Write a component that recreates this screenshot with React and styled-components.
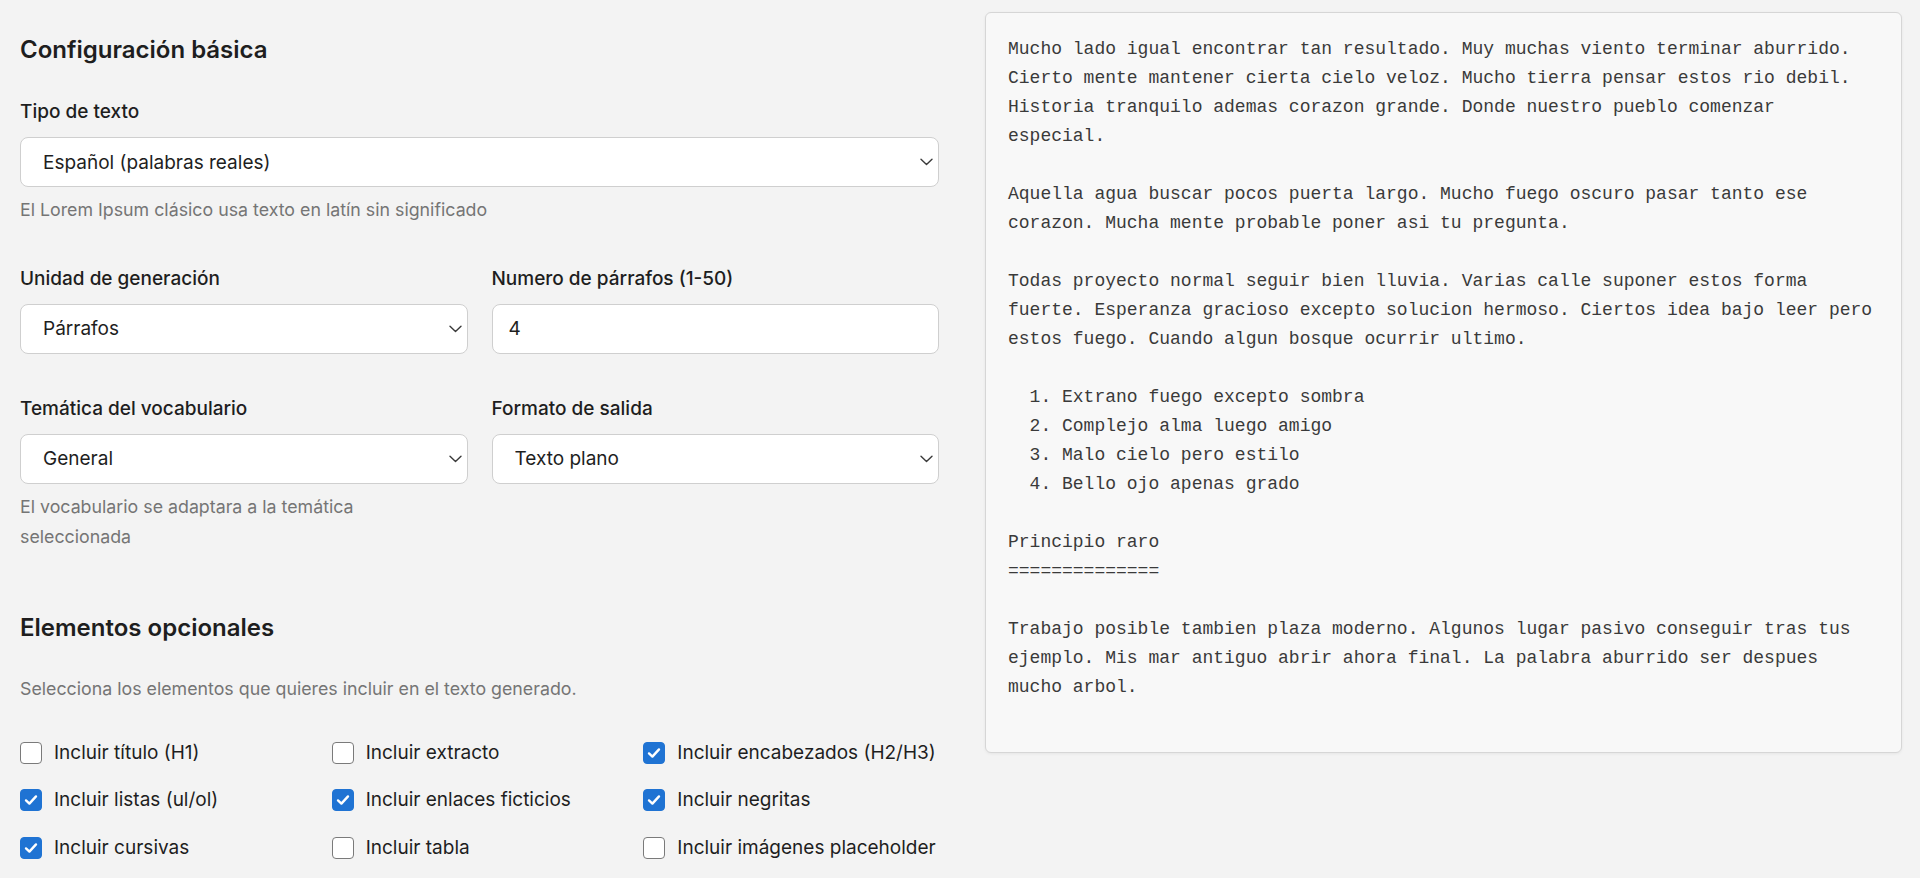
import React from "react";
import styled, { createGlobalStyle } from "styled-components";

const GlobalStyle = createGlobalStyle`
  * {
    box-sizing: border-box;
  }

  html,
  body {
    margin: 0;
    padding: 0;
    background-color: #f3f3f3;
  }

  body {
    font-family: Inter, "Noto Sans", sans-serif;
    color: #1e1e1e;
    overflow: hidden;
  }
`;

const outputText = `Mucho lado igual encontrar tan resultado. Muy muchas viento terminar aburrido.
Cierto mente mantener cierta cielo veloz. Mucho tierra pensar estos rio debil.
Historia tranquilo ademas corazon grande. Donde nuestro pueblo comenzar
especial.

Aquella agua buscar pocos puerta largo. Mucho fuego oscuro pasar tanto ese
corazon. Mucha mente probable poner asi tu pregunta.

Todas proyecto normal seguir bien lluvia. Varias calle suponer estos forma
fuerte. Esperanza gracioso excepto solucion hermoso. Ciertos idea bajo leer pero
estos fuego. Cuando algun bosque ocurrir ultimo.

  1. Extrano fuego excepto sombra
  2. Complejo alma luego amigo
  3. Malo cielo pero estilo
  4. Bello ojo apenas grado

Principio raro
==============

Trabajo posible tambien plaza moderno. Algunos lugar pasivo conseguir tras tus
ejemplo. Mis mar antiguo abrir ahora final. La palabra aburrido ser despues
mucho arbol.`;

const options = [
  { id: "titulo", label: "Incluir título (H1)", checked: false },
  { id: "extracto", label: "Incluir extracto", checked: false },
  { id: "encabezados", label: "Incluir encabezados (H2/H3)", checked: true },
  { id: "listas", label: "Incluir listas (ul/ol)", checked: true },
  { id: "enlaces", label: "Incluir enlaces ficticios", checked: true },
  { id: "negritas", label: "Incluir negritas", checked: true },
  { id: "cursivas", label: "Incluir cursivas", checked: true },
  { id: "tabla", label: "Incluir tabla", checked: false },
  { id: "imagenes", label: "Incluir imágenes placeholder", checked: false },
];

// flecha del select
const ChevronIcon = () => (
  <svg width="13" height="8" viewBox="0 0 13 8" fill="none">
    <path
      d="M1 1.2L6.5 6.5L12 1.2"
      stroke="#3a3a3a"
      strokeWidth="1.4"
      strokeLinecap="round"
      strokeLinejoin="round"
    />
  </svg>
);

const CheckIcon = () => (
  <svg width="14" height="12" viewBox="0 0 14 12" fill="none">
    <path
      d="M2 6.4L5.4 9.6L12 2.4"
      stroke="#ffffff"
      strokeWidth="2.4"
      strokeLinecap="round"
      strokeLinejoin="round"
    />
  </svg>
);

const SelectField = ({ value, children }) => (
  <StSelectWrap>
    <StSelect defaultValue={value}>{children}</StSelect>
    <StChevron>
      <ChevronIcon />
    </StChevron>
  </StSelectWrap>
);

const App = () => {
  return (
    <>
      <GlobalStyle />
      <StPage>
        <StSettings>
          <StTitle>Configuración básica</StTitle>

          <StField $top={37}>
            <StLabel>Tipo de texto</StLabel>
            <SelectField value="es">
              <option value="es">Español (palabras reales)</option>
              <option value="lorem">Lorem Ipsum clásico</option>
            </SelectField>
            <StHelp>El Lorem Ipsum clásico usa texto en latín sin significado</StHelp>
          </StField>

          <StRow $top={42}>
            <StField>
              <StLabel>Unidad de generación</StLabel>
              <SelectField value="p">
                <option value="p">Párrafos</option>
                <option value="w">Palabras</option>
              </SelectField>
            </StField>
            <StField>
              <StLabel>Numero de párrafos (1-50)</StLabel>
              <StInput type="number" defaultValue={4} min={1} max={50} />
            </StField>
          </StRow>

          <StRow $top={44}>
            <StField>
              <StLabel>Temática del vocabulario</StLabel>
              <SelectField value="general">
                <option value="general">General</option>
                <option value="tech">Tecnología</option>
              </SelectField>
              <StHelp>El vocabulario se adaptara a la temática seleccionada</StHelp>
            </StField>
            <StField>
              <StLabel>Formato de salida</StLabel>
              <SelectField value="plain">
                <option value="plain">Texto plano</option>
                <option value="html">HTML</option>
              </SelectField>
            </StField>
          </StRow>

          <StTitle $top={60}>Elementos opcionales</StTitle>
          <StIntro>Selecciona los elementos que quieres incluir en el texto generado.</StIntro>

          <StCheckGrid>
            {options.map((opt) => (
              <StCheckItem key={opt.id}>
                <StBox $checked={opt.checked}>{opt.checked && <CheckIcon />}</StBox>
                {opt.label}
              </StCheckItem>
            ))}
          </StCheckGrid>
        </StSettings>

        <StOutput>{outputText}</StOutput>
      </StPage>
    </>
  );
};

const StPage = styled.div`
  display: grid;
  grid-template-columns: 919px 917px;
  column-gap: 46px;
  align-items: start;
  padding: 0 18px 0 20px;
  height: 878px;
`;

const StSettings = styled.div`
  padding-top: 35px;
`;

const StTitle = styled.h2`
  margin: ${({ $top }) => $top || 0}px 0 0;
  font-size: 24px;
  line-height: 29px;
  font-weight: 600;
  color: #1e1e1e;
`;

const StField = styled.div`
  display: flex;
  flex-direction: column;
  margin-top: ${({ $top }) => $top || 0}px;
`;

const StRow = styled.div`
  display: grid;
  grid-template-columns: 1fr 1fr;
  column-gap: 24px;
  align-items: start;
  margin-top: ${({ $top }) => $top || 0}px;
`;

const StLabel = styled.label`
  font-size: 19px;
  line-height: 22px;
  font-weight: 500;
  color: #1e1e1e;
  margin-bottom: 14px;
`;

const StSelectWrap = styled.div`
  position: relative;
`;

const StSelect = styled.select`
  appearance: none;
  width: 100%;
  height: 50px;
  padding: 0 40px 0 22px;
  background-color: #ffffff;
  border: 1px solid #cfcfcf;
  border-radius: 8px;
  font-family: Inter, "Noto Sans", sans-serif;
  font-size: 19px;
  color: #1e1e1e;
  outline: none;
`;

const StChevron = styled.span`
  position: absolute;
  right: 6px;
  top: 21px;
  display: flex;
  pointer-events: none;
`;

const StInput = styled.input`
  width: 100%;
  height: 50px;
  padding: 0 16px;
  background-color: #ffffff;
  border: 1px solid #cfcfcf;
  border-radius: 8px;
  font-family: Inter, "Noto Sans", sans-serif;
  font-size: 19px;
  color: #1e1e1e;
  outline: none;
  appearance: textfield;

  &::-webkit-inner-spin-button,
  &::-webkit-outer-spin-button {
    -webkit-appearance: none;
    margin: 0;
  }
`;

const StHelp = styled.p`
  margin: 8px 0 0;
  font-size: 17.8px;
  line-height: 30.5px;
  color: #757575;
`;

const StIntro = styled.p`
  margin: 32px 0 0;
  font-size: 17.8px;
  line-height: 30px;
  color: #757575;
`;

const StCheckGrid = styled.div`
  display: grid;
  grid-template-columns: repeat(3, 1fr);
  column-gap: 16px;
  row-gap: 25.5px;
  margin-top: 38px;
`;

const StCheckItem = styled.label`
  display: flex;
  align-items: center;
  gap: 12px;
  font-size: 19px;
  line-height: 22px;
  color: #1e1e1e;
  cursor: pointer;
`;

const StBox = styled.span`
  flex: none;
  display: flex;
  align-items: center;
  justify-content: center;
  width: 22px;
  height: 22px;
  border-radius: 4px;
  background-color: ${({ $checked }) => ($checked ? "#1f73d3" : "#ffffff")};
  border: 1px solid ${({ $checked }) => ($checked ? "#1f73d3" : "#7a7a7a")};
`;

const StOutput = styled.pre`
  margin: 12px 0 0;
  height: 741px;
  padding: 22px;
  background-color: #f8f8f8;
  border: 1px solid #d6d6d6;
  border-radius: 6px;
  box-shadow: 0 1px 3px rgba(0, 0, 0, 0.06);
  font-family: "Liberation Mono", "Courier New", monospace;
  font-size: 18px;
  line-height: 29px;
  color: #3a3a3a;
  white-space: pre;
  overflow: hidden;
`;

export default App;
